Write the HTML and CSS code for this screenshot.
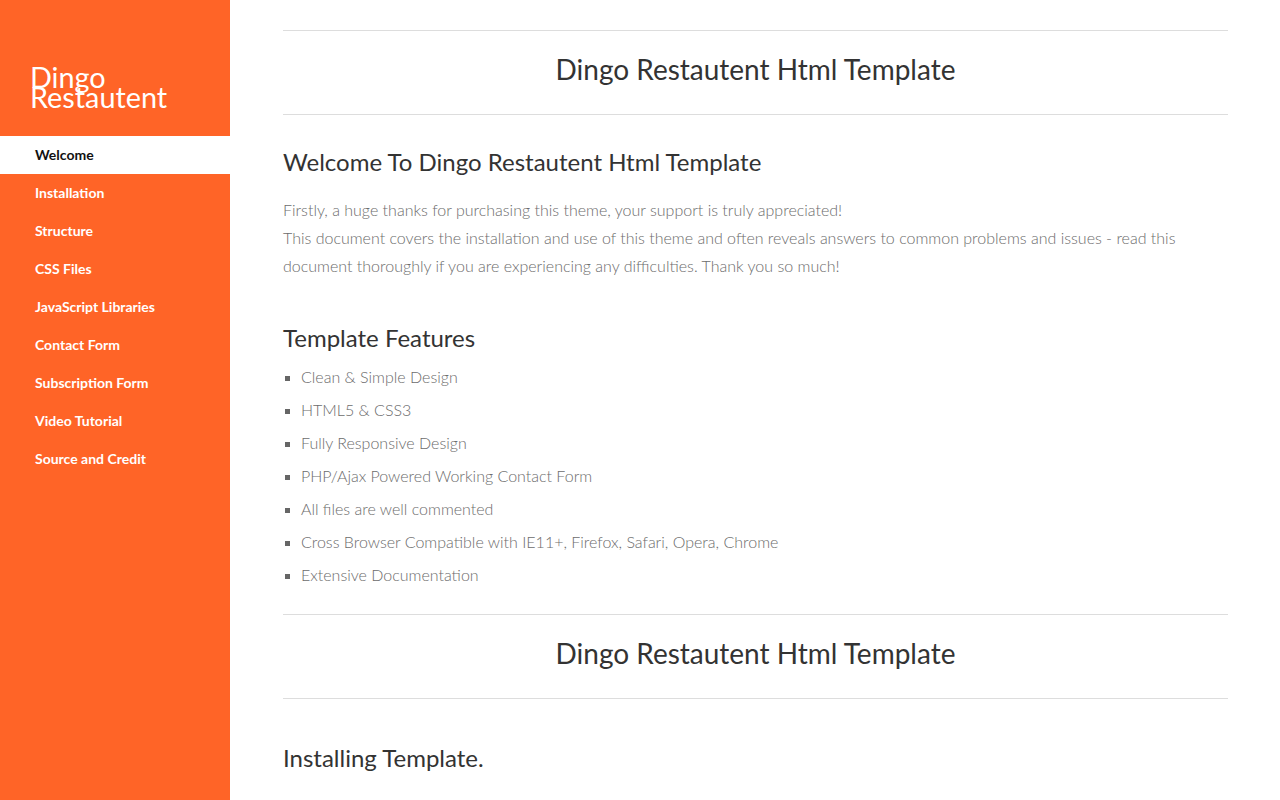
FILE: index.html
```html
<!DOCTYPE html>
<html lang="en">
<head>
<meta charset="utf-8">
<title>Dingo Restautent Documentation</title>
<link rel="stylesheet" href="styles.css">
</head>
<body>
<aside class="sidebar">
  <div class="logo">Dingo Restautent</div>
  <nav class="nav">
    <a class="nav-item active" href="#welcome">Welcome</a>
    <a class="nav-item" href="#installation">Installation</a>
    <a class="nav-item" href="#structure">Structure</a>
    <a class="nav-item" href="#css">CSS Files</a>
    <a class="nav-item" href="#js">JavaScript Libraries</a>
    <a class="nav-item" href="#contact">Contact Form</a>
    <a class="nav-item" href="#subscription">Subscription Form</a>
    <a class="nav-item" href="#video">Video Tutorial</a>
    <a class="nav-item" href="#credit">Source and Credit</a>
  </nav>
</aside>
<main class="main">
  <section class="section" id="welcome">
    <div class="page-title">Dingo Restautent Html Template</div>
    <h2 class="heading">Welcome To Dingo Restautent Html Template</h2>
    <p class="text">Firstly, a huge thanks for purchasing this theme, your support is truly appreciated!<br>This document covers the installation and use of this theme and often reveals answers to common problems and issues - read this document thoroughly if you are experiencing any difficulties. Thank you so much!</p>
    <h2 class="heading features">Template Features</h2>
    <ul class="list">
      <li>Clean &amp; Simple Design</li>
      <li>HTML5 &amp; CSS3</li>
      <li>Fully Responsive Design</li>
      <li>PHP/Ajax Powered Working Contact Form</li>
      <li>All files are well commented</li>
      <li>Cross Browser Compatible with IE11+, Firefox, Safari, Opera, Chrome</li>
      <li>Extensive Documentation</li>
    </ul>
  </section>
  <section class="section" id="installation">
    <div class="page-title">Dingo Restautent Html Template</div>
    <h2 class="heading install">Installing Template.</h2>
  </section>
</main>
</body>
</html>
```

FILE: styles.css
```css
* { box-sizing: border-box; }
html, body { margin: 0; padding: 0; }
body {
  font-family: Lato, "Open Sans", sans-serif;
  color: #333;
  background: #fff;
  min-height: 100vh;
}
.sidebar {
  width: 230px;
  background: #ff6427;
  position: fixed;
  top: 0;
  left: 0;
  bottom: 0;
}
.logo {
  color: #fff;
  font-size: 28.8px;
  line-height: 20px;
  font-weight: 400;
  padding: 67px 30px 0 30px;
  height: 136px;
}
.nav { display: flex; flex-direction: column; }
.nav-item {
  display: block;
  height: 38px;
  line-height: 38px;
  padding-left: 35px;
  color: #fff;
  font-weight: 700;
  font-size: 14px;
  text-decoration: none;
}
.nav-item.active { background: #fff; color: #111; }
.main {
  margin-left: 230px;
  padding: 30px 52px 0 53px;
}
.page-title {
  border-top: 1px solid #ddd;
  border-bottom: 1px solid #ddd;
  text-align: center;
  font-size: 28px;
  line-height: 76px;
  height: 85px;
  color: #333;
}
.heading {
  font-size: 24px;
  font-weight: 400;
  margin: 32px 0 19px;
  line-height: 30px;
  color: #333;
}
.heading.features { margin-top: 43px; margin-bottom: 7px; }
.heading.install { margin-top: 44px; }
.text {
  font-size: 16px;
  font-weight: 300;
  line-height: 28px;
  color: #6c6c6c;
  margin: 0;
}
.list {
  list-style: square;
  margin: 0 0 23px;
  padding-left: 18px;
  color: #6c6c6c;
  font-size: 16px;
  font-weight: 300;
}
.list li { line-height: 33px; }
.list li::marker { color: #666; font-size: 14px; }
```
